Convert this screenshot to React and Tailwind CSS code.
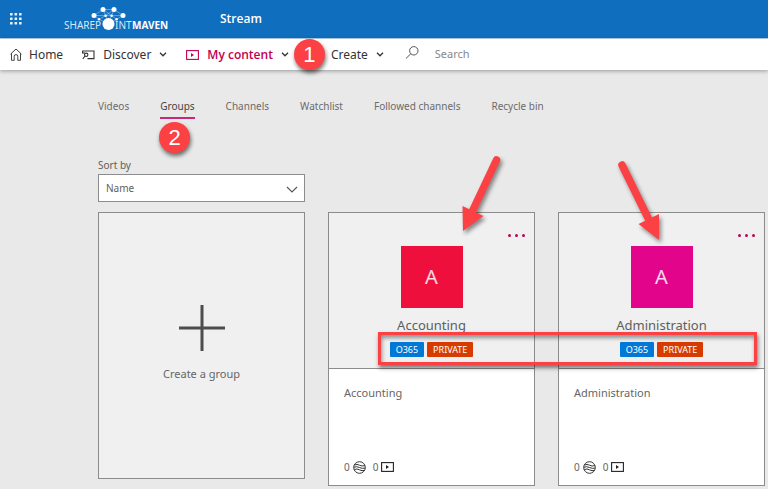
const tabs = ['Videos', 'Groups', 'Channels', 'Watchlist', 'Followed channels', 'Recycle bin']

const groups = [
  { name: 'Accounting', tile: 'bg-[#ee0f3d]', arrow: 'left' },
  { name: 'Administration', tile: 'bg-[#e3048c]', arrow: 'right' },
]

function Logo() {
  return (
    <svg width="108" height="26" viewBox="0 0 108 26" role="img" aria-label="SharePoint Maven" fill="white">
      <path
        d="M31 9.500 40 3.500H51L60 9.500 M31 9.500 42.600 9.700 40 3.500 M40 3.500 48.600 9.700 51 3.500 42.600 9.700 M60 9.500 48.600 9.700 M31 9.500 36 13.300 42.600 9.700H48.600L53.600 13.300 60 9.500 M36 13.300 45.500 18 42.600 9.700 M48.600 9.700 45.500 18 53.600 13.300"
        stroke="white"
        strokeWidth="0.5"
        strokeOpacity="0.7"
        fill="none"
      />
      <circle cx="31" cy="9.5" r="2.5" />
      <circle cx="40" cy="3.5" r="2.5" />
      <circle cx="51" cy="3.5" r="2.5" />
      <circle cx="60" cy="9.5" r="2.5" />
      <circle cx="36" cy="13.3" r="1.2" />
      <circle cx="42.6" cy="9.7" r="1.2" />
      <circle cx="48.6" cy="9.7" r="1.2" />
      <circle cx="53.6" cy="13.3" r="1.2" />
      <circle cx="45.5" cy="18" r="6" />
      <text x="1" y="23" fontSize="10" fillOpacity="0.85">SHAREP</text>
      <text x="52" y="23" fontSize="10" fillOpacity="0.85">INT</text>
      <text x="69" y="23" fontSize="10" fontWeight="700">MAVEN</text>
    </svg>
  )
}

function Waffle() {
  return (
    <svg width="14" height="12" viewBox="0 0 14 12" fill="white" fillOpacity="0.9" aria-hidden="true">
      {[1, 5.5, 10].map((x) => [0, 4.5, 9].map((y) => <rect key={`${x}-${y}`} x={x} y={y} width="2.6" height="2.6" rx="0.5" />))}
    </svg>
  )
}

function HomeIcon() {
  return (
    <svg width="12" height="13" viewBox="0 0 12 13" fill="none" stroke="#444" aria-hidden="true">
      <path d="M0.500 6.200 6 1 11.500 6.200 M1.500 5.300V12.300H4.200V8.200Q4.200 6.600 6 6.600T7.800 8.200V12.300H10.500V5.300" />
    </svg>
  )
}

function DiscoverIcon() {
  return (
    <svg width="13" height="10" viewBox="0 0 13 10" fill="none" stroke="#333" strokeWidth="1.1" aria-hidden="true">
      <path d="M0.600 3.500V1H12V8.600H5.500" />
      <circle cx="4.2" cy="4.8" r="1.7" />
      <path d="M3 6 0.800 8.800M0.600 3H3" />
    </svg>
  )
}

function VideoIcon({ color }) {
  return (
    <svg width="13" height="10" viewBox="0 0 13 10" fill="none" stroke={color} aria-hidden="true">
      <rect x="0.6" y="0.6" width="11.8" height="8.8" strokeWidth="1.1" />
      <path d="M5 3V7L8 5Z" fill={color} stroke="none" />
    </svg>
  )
}

function ChannelIcon() {
  return (
    <svg width="13" height="13" viewBox="0 0 13 13" fill="none" stroke="#333" aria-hidden="true">
      <circle cx="6.5" cy="6.5" r="5.8" />
      <path d="M1.500 4Q4 2.800 6.500 4.200T11.800 4.600M0.800 6.300Q3.500 5 6.500 6.500T12.200 7M1.300 8.600Q4 7.300 6.500 8.800T11.500 9.300" />
    </svg>
  )
}

function SearchIcon() {
  return (
    <svg width="14" height="13" viewBox="0 0 14 13" fill="none" stroke="#555" aria-hidden="true" className="mb-[5px]">
      <circle cx="8.8" cy="4.8" r="4.2" />
      <path d="M5.800 7.800 0.800 12.600" />
    </svg>
  )
}

function Chevron() {
  return (
    <svg width="8" height="5" viewBox="0 0 8 5" fill="none" stroke="#333" strokeWidth="1.3" aria-hidden="true">
      <path d="M1 0.800 4 3.800 7 0.800" />
    </svg>
  )
}

// Numbered step marker
function Step({ n, className }) {
  return (
    <span
      className={`absolute z-10 flex size-[31px] items-center justify-center rounded-full bg-[#fc4144] font-['Liberation_Sans',sans-serif] text-[22px] text-white shadow-[1px_3px_4px_rgba(0,0,0,0.55)] ${className}`}
    >
      {n}
    </span>
  )
}

function Arrow({ side }) {
  const left = side === 'left'
  return (
    <svg
      width="48"
      height="86"
      viewBox="0 0 48 86"
      aria-hidden="true"
      className={`absolute z-10 drop-shadow-[2px_3px_2px_rgba(0,0,0,0.45)] ${left ? '-top-[61px] left-[128px]' : '-top-[56px] left-[57px]'}`}
    >
      <g fill="#fc4144" stroke="#fc4144">
        <path d={left ? 'M39.500 8 14 62' : 'M6 8 34 65'} strokeWidth="7.5" strokeLinecap="round" />
        <path d={left ? 'M6 79 5.500 54 26.500 64Z' : 'M43 83 22.500 67 43 57Z'} stroke="none" />
      </g>
    </svg>
  )
}

function GroupCard({ group }) {
  return (
    <article className="relative flex h-[274px] flex-col border border-[#8c8c8c] bg-white">
      <Arrow side={group.arrow} />
      <div className="relative flex h-[156px] flex-col items-center border-b border-[#8c8c8c] bg-[#f0f0f0] pt-[33px]">
        <button type="button" aria-label={`More options for ${group.name}`} className="absolute right-[9px] top-[21px] flex gap-[4px]">
          <span className="size-[3px] rounded-full bg-[#c30052]" />
          <span className="size-[3px] rounded-full bg-[#c30052]" />
          <span className="size-[3px] rounded-full bg-[#c30052]" />
        </button>
        <div className={`flex size-[62px] items-center justify-center text-[20px] text-white/85 ${group.tile}`}>A</div>
        <h2 className="mt-2 text-[13px] leading-[18px] text-[#605e5c]">{group.name}</h2>
        <div className="mt-2 flex gap-[3px] text-[9px] leading-[15px] text-white">
          <span className="rounded-[1px] bg-[#0078d7] px-[6px]">O365</span>
          <span className="rounded-[1px] bg-[#d83b01] px-[6px]">PRIVATE</span>
        </div>
      </div>
      <div className="flex flex-1 flex-col justify-between px-[15px] pb-[10px] pt-4">
        <p className="text-[11px] leading-4 text-[#666]">{group.name}</p>
        <div className="flex items-center text-[10px] leading-4 text-[#666]">
          <span className="mr-[3px]">0</span>
          <ChannelIcon />
          <span className="ml-[7px] mr-[3px]">0</span>
          <VideoIcon color="#222" />
        </div>
      </div>
    </article>
  )
}

export default function App() {
  return (
    <div className="min-h-screen overflow-hidden bg-[#e9e9e9] font-['Noto_Sans','Open_Sans',sans-serif] text-[#333]">
      <header className="flex h-[39px] items-center border-b border-[#b9d4ee] bg-[#106ebe] pl-[9px] text-white">
        <button type="button" aria-label="App launcher" className="mr-10">
          <Waffle />
        </button>
        <Logo />
        <a href="#stream" className="ml-[49px] font-['Open_Sans',sans-serif] text-[12px] font-semibold">
          Stream
        </a>
      </header>

      <nav className="flex h-[31px] items-center bg-white pl-[10px] text-[12px] shadow-[0_1px_4px_rgba(0,0,0,0.35)]">
        <a href="#home" className="flex items-center gap-[7px]">
          <HomeIcon />
          Home
        </a>
        <button type="button" className="ml-[19px] flex items-center gap-2">
          <DiscoverIcon />
          Discover
          <Chevron />
        </button>
        <button type="button" className="ml-[19px] flex items-center gap-2 font-['Open_Sans',sans-serif] font-semibold text-[#c30052]">
          <VideoIcon color="#c30052" />
          My content
          <Chevron />
        </button>
        <div className="relative ml-[42px]">
          <Step n={1} className="-left-[37px] -top-[7px]" />
          <button type="button" className="flex items-center gap-2">
            Create
            <Chevron />
          </button>
        </div>
        <label className="ml-[21px] flex flex-1 items-center gap-4">
          <SearchIcon />
          <input type="search" aria-label="Search" placeholder="Search" className="min-w-0 flex-1 bg-transparent text-[11px] outline-none placeholder:text-[#888]" />
        </label>
      </nav>

      <main className="pl-[98px] pr-[3px] pt-[28px]">
        <div className="flex items-start gap-[31px] text-[10px] leading-4 text-[#6b6b6b]">
          {tabs.map((t) => (
            <a
              key={t}
              href={`#${t.replace(' ', '-').toLowerCase()}`}
              className={t === 'Groups' ? 'relative border-b-2 border-[#c8287a] pb-[3px] text-[#444]' : ''}
            >
              {t}
              {t === 'Groups' && <Step n={2} className="-left-px top-6" />}
            </a>
          ))}
        </div>

        <div className="mt-[38px] grid grid-cols-3 gap-x-[23px]">
          <div className="relative">
            <label htmlFor="sort" className="block text-[10px] leading-4 text-[#605e5c]">
              Sort by
            </label>
            <select
              id="sort"
              className="mt-px block h-[28px] w-full appearance-none border border-[#8c8c8c] bg-white pl-[7px] text-[10px] text-[#605e5c]"
            >
              <option>Name</option>
            </select>
            <svg width="12" height="7" viewBox="0 0 12 7" fill="none" stroke="#555" strokeWidth="1.1" aria-hidden="true" className="pointer-events-none absolute bottom-[9px] right-[7px]">
              <path d="M1 1 6 6 11 1" />
            </svg>
          </div>
        </div>

        <section className="relative mt-[10px] grid grid-cols-3 items-start gap-x-[23px]">
          <button type="button" className="flex h-[267px] flex-col items-center border border-[#8c8c8c] bg-[#f0f0f0] pt-[91px] text-[11px] leading-4 text-[#666]">
            <svg width="48" height="48" viewBox="0 0 48 48" fill="none" stroke="#4d4d4d" strokeWidth="3" aria-hidden="true">
              <path d="M24 1V47M1 24H47" />
            </svg>
            <span className="mt-[14px]">Create a group</span>
          </button>
          {groups.map((g) => (
            <GroupCard key={g.name} group={g} />
          ))}
          <div className="pointer-events-none absolute left-[280px] right-[8px] top-[120px] h-[33px] border-[3px] border-[#fc4144] shadow-[1px_3px_4px_rgba(0,0,0,0.5),inset_1px_3px_4px_rgba(0,0,0,0.4)]" />
        </section>
      </main>
    </div>
  )
}
